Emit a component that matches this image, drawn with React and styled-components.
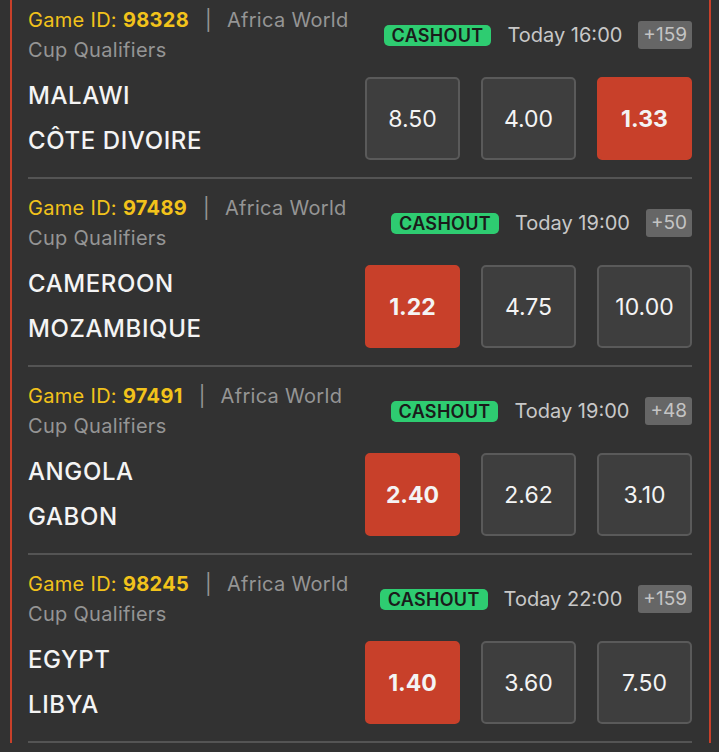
import styled, { createGlobalStyle } from "styled-components"

const GlobalStyle = createGlobalStyle`
  html, body {
    margin: 0;
    padding: 0;
    background: #323232;
    overflow: hidden;
  }
  body {
    font-family: Inter, "Noto Sans", sans-serif;
  }
`;

const games = [
  { id: "98328", league: "Africa World Cup Qualifiers", time: "Today 16:00", more: "+159",
    home: "MALAWI", away: "CÔTE DIVOIRE", odds: ["8.50", "4.00", "1.33"], picked: 2 },
  { id: "97489", league: "Africa World Cup Qualifiers", time: "Today 19:00", more: "+50",
    home: "CAMEROON", away: "MOZAMBIQUE", odds: ["1.22", "4.75", "10.00"], picked: 0 },
  { id: "97491", league: "Africa World Cup Qualifiers", time: "Today 19:00", more: "+48",
    home: "ANGOLA", away: "GABON", odds: ["2.40", "2.62", "3.10"], picked: 0 },
  { id: "98245", league: "Africa World Cup Qualifiers", time: "Today 22:00", more: "+159",
    home: "EGYPT", away: "LIBYA", odds: ["1.40", "3.60", "7.50"], picked: 0 },
];

export default function App() {
  return (
    <>
      <GlobalStyle />
      <Page>
        <List>
          {games.map((game) => (
            <Game key={game.id}>
              <Header>
                <Info>
                  <GameLabel>Game ID:</GameLabel>
                  <GameNumber>{game.id}</GameNumber>
                  <Pipe>|</Pipe>
                  {game.league}
                </Info>
                <Meta>
                  <Cashout>CASHOUT</Cashout>
                  <Time>{game.time}</Time>
                  <More>{game.more}</More>
                </Meta>
              </Header>
              <Body>
                <Teams>
                  <Team>{game.home}</Team>
                  <Team>{game.away}</Team>
                </Teams>
                <Odds>
                  {game.odds.map((odd, i) => (
                    <Odd key={i} $active={i === game.picked}>{odd}</Odd>
                  ))}
                </Odds>
              </Body>
            </Game>
          ))}
        </List>
      </Page>
    </>
  )
};

const Page = styled.div`
  height: 752px;
  padding: 0 8px 0 10px;
  box-sizing: border-box;
`;

const List = styled.div`
  border-left: 2px solid #c8402a;
  border-right: 2px solid #c8402a;
  padding: 0 17px 0 16px;
  box-sizing: border-box;
  margin-top: -9px;
  height: calc(100% + 9px);
`;

const Game = styled.div`
  padding: 14px 0 17px;
  border-bottom: 2px solid #545454;
`;

const Header = styled.div`
  display: flex;
  align-items: center;
  justify-content: space-between;
`;

const Info = styled.div`
  width: 335px;
  font-size: 20px;
  letter-spacing: 0.3px;
  line-height: 30px;
  color: #959595;
`;

const GameLabel = styled.span`
  color: #f2c31b;
  margin-right: 6px;
`;

const GameNumber = styled.span`
  color: #f2c31b;
  font-weight: 700;
`;

const Pipe = styled.span`
  margin: 0 15px 0 16px;
`;

const Meta = styled.div`
  display: flex;
  align-items: center;
`;

const Cashout = styled.span`
  background: #2ecc71;
  color: #1b1b1b;
  font-size: 18px;
  font-weight: 600;
  letter-spacing: 0.3px;
  line-height: 21px;
  padding: 0 8px;
  border-radius: 5px;
`;

const Time = styled.span`
  color: #c8c8c8;
  font-size: 20px;
  margin: 0 16px;
`;

const More = styled.span`
  background: #666666;
  color: #c4c4c4;
  font-size: 19px;
  line-height: 28px;
  padding: 0 5px;
  border-radius: 3px;
`;

const Body = styled.div`
  display: flex;
  align-items: center;
  justify-content: space-between;
  margin-top: 12px;
`;

const Teams = styled.div`
  display: flex;
  flex-direction: column;
  gap: 7px;
`;

const Team = styled.div`
  color: #f4f4f4;
  font-size: 24px;
  font-weight: 500;
  letter-spacing: 0.6px;
  line-height: 38px;
`;

const Odds = styled.div`
  display: flex;
  gap: 21px;
`;

const Odd = styled.button`
  width: 95px;
  height: 83px;
  box-sizing: border-box;
  border-radius: 5px;
  border: 2px solid ${(p) => (p.$active ? "#c8402a" : "#5a5a5a")};
  background: ${(p) => (p.$active ? "#c8402a" : "#3e3e3e")};
  color: #f4f4f4;
  font-family: inherit;
  font-size: 23px;
  font-weight: ${(p) => (p.$active ? 700 : 400)};
  cursor: pointer;
`;
